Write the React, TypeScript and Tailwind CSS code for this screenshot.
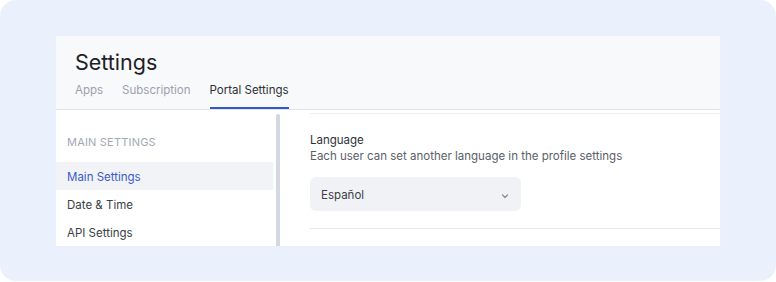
import React from "react";

export default function App() {
  return (
    <div className="w-[776px] h-[282px] bg-white" style={{ fontFamily: "Inter, 'Noto Sans', sans-serif" }}>
      <div className="w-[776px] h-[281px] rounded-[16px] bg-[#ebf1fc] pt-[36px] pl-[56px]">
        <div className="w-[664px] h-[210px] flex flex-col bg-white overflow-hidden">
          <div className="bg-[#f8f9fb] border-b border-[#dfe3ea] pl-[19px] pt-[12px]">
            <div className="text-[21.5px] leading-[28px] text-[#1d2025]">Settings</div>
            <div className="flex gap-[19px] text-[11.5px]">
              <div className="h-[33px] pt-[5px] leading-[18px] text-[#9aa1ad] border-b-2 border-transparent">Apps</div>
              <div className="h-[33px] pt-[5px] leading-[18px] text-[#9aa1ad] border-b-2 border-transparent">Subscription</div>
              <div className="h-[33px] pt-[5px] leading-[18px] text-[#2b2f36] border-b-2 border-[#3558c8]">Portal Settings</div>
            </div>
          </div>
          <div className="flex flex-1">
            <div className="w-[220px] flex flex-col pt-[22px] text-[11.5px]">
              <div className="pl-[11px] h-[18px] leading-[18px] text-[11px] text-[#a3a9b3] tracking-[0.2px] mt-[1px]">MAIN SETTINGS</div>
              <div className="mt-[11px] w-[217px] h-[28px] flex items-center pl-[11px] pt-[4px] bg-[#f1f3f7] text-[#3a5bc7]">Main Settings</div>
              <div className="h-[28px] flex items-center pl-[11px] pt-[4px] text-[#3a3e45]">Date &amp; Time</div>
              <div className="h-[28px] flex items-center pl-[11px] pt-[4px] text-[#3a3e45]">API Settings</div>
            </div>
            <div className="w-[4px] mt-[4px] rounded-t-[2px] bg-[#d3d8e1]"></div>
            <div className="flex-1 pl-[30px] pt-[3px]">
              <div className="border-t border-[#eceef2] pt-[17px]">
                <div className="text-[11.5px] leading-[18px] text-[#2e3238]">Language</div>
                <div className="text-[11.5px] leading-[14px] text-[#5b6069]">Each user can set another language in the profile settings</div>
                <div className="mt-[14px] w-[211px] h-[34px] rounded-[6px] bg-[#f1f2f6] flex items-center justify-between pl-[11px] pr-[11px] pt-[3px] text-[11.5px] text-[#3a3e45]">
                  <span>Español</span>
                  <svg width="10" height="10" viewBox="0 0 10 10" fill="none">
                    <path d="M2.5 4 L5 6.5 L7.5 4" stroke="#8a909a" strokeWidth="1.4" strokeLinecap="round" strokeLinejoin="round" />
                  </svg>
                </div>
                <div className="mt-[17px] border-t border-[#e6e8ec]"></div>
              </div>
            </div>
          </div>
        </div>
      </div>
    </div>
  );
}
